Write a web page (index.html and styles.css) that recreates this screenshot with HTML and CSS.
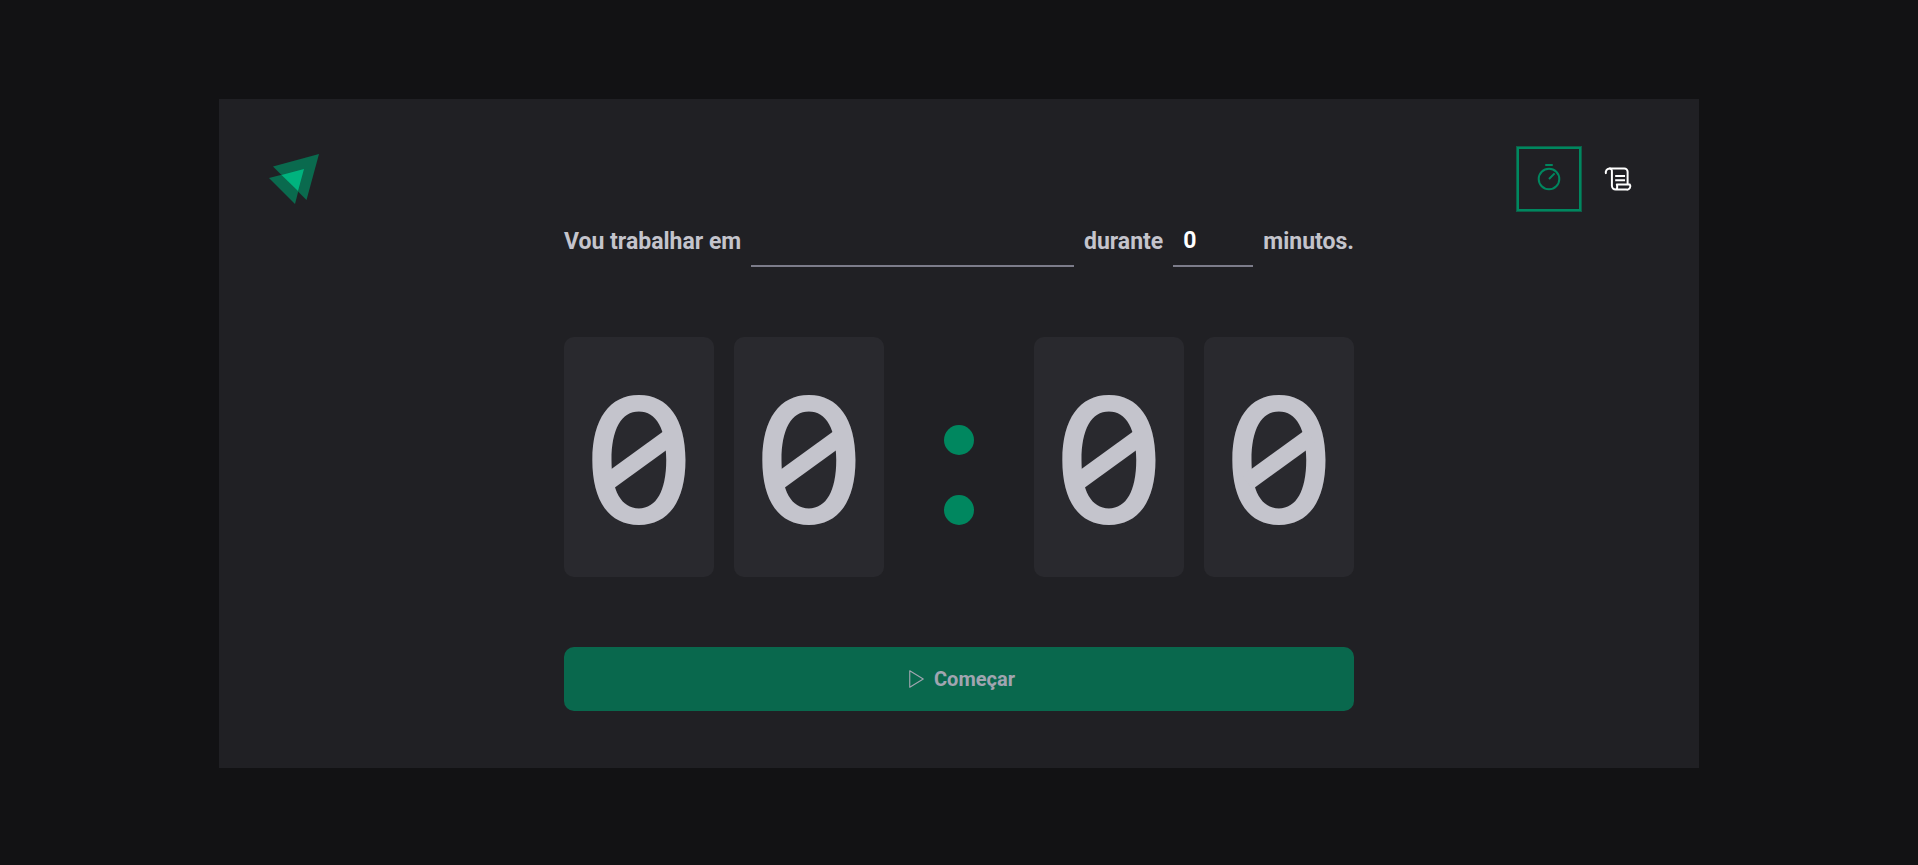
FILE: index.html
```html
<!DOCTYPE html>
<html lang="pt-BR">
<head>
    <meta charset="UTF-8">
    <meta name="viewport" content="width=device-width, initial-scale=1.0">
    <title>Ignite Timer</title>
    <link rel="stylesheet" href="styles.css">
</head>

<body>
    <div class="layout">
        <header class="header">
            <svg class="logo" viewBox="0 0 52 52" aria-label="Ignite">
                <path class="logo-shape" d="M5 13.500 51 1 38.500 47z"/>
                <path class="logo-shape" d="M1 25 36 16 27 51z"/>
                <path class="logo-core" d="M13.500 22 36 16 30 38z"/>
            </svg>
            <nav class="nav">
                <a class="active" href="#timer" title="Timer">
                    <svg viewBox="0 0 256 256">
                        <circle cx="128" cy="128" r="88"/>
                        <path d="M128 128 176 80M96 8h64"/>
                    </svg>
                </a>
                <a href="#history" title="Histórico">
                    <svg viewBox="0 0 256 256">
                        <path d="M26 84a34 34 0 0 1 28-46h128a28 28 0 0 1 28 28v108"/>
                        <path d="M54 38a22 22 0 0 1 22 26v122a32 32 0 0 0 32 32h92a28 28 0 0 0 28-44H118c6 18 4 44-10 44"/>
                        <path d="M104 102h84M104 138h84"/>
                    </svg>
                </a>
            </nav>
        </header>

        <main>
            <form class="timer">
                <div class="task-row">
                    <label for="task">Vou trabalhar em</label>
                    <input type="text" id="task" name="task">
                    <label for="minutes">durante</label>
                    <input type="text" inputmode="numeric" id="minutes" name="minutes" value="0">
                    <span>minutos.</span>
                </div>

                <div class="countdown">
                    <span class="digit zero">0</span>
                    <span class="digit zero">0</span>
                    <div class="separator"><i></i><i></i></div>
                    <span class="digit zero">0</span>
                    <span class="digit zero">0</span>
                </div>

                <button type="submit" disabled>
                    <svg viewBox="0 0 256 256"><path d="M72 40v176l144-88z"/></svg>
                    Começar
                </button>
            </form>
        </main>
    </div>
</body>
</html>
```
FILE: styles.css
```css
* {
    margin: 0;
    padding: 0;
    box-sizing: border-box;
}

body {
    background-color: #121214;
    color: #c4c4cc;
    font-family: Roboto, sans-serif;
}

.layout {
    max-width: 1480px;
    margin: 99px auto 97px;
    padding: 48px 49px 57px;
    background-color: #202024;
}

.header {
    display: flex;
    align-items: center;
    justify-content: space-between;
}

.logo {
    width: 52px;
    height: 52px;
}

.logo-shape {
    fill: #0a6a4e;
}

.logo-core {
    fill: #00b37e;
}

.nav {
    display: flex;
    gap: 5px;
}

.nav a {
    display: flex;
    align-items: center;
    justify-content: center;
    width: 64px;
    height: 64px;
    color: #fff;
}

.nav a.active {
    border: 2px solid #00875f;
    box-shadow: 0 0 0 1px #0c5f47;
    color: #00875f;
}

.nav svg {
    width: 30px;
    height: 30px;
    overflow: visible;
    fill: none;
    stroke: currentColor;
    stroke-width: 17;
    stroke-linejoin: round;
}

.timer {
    display: flex;
    flex-direction: column;
    gap: 70px;
    max-width: 790px;
    margin: 5px auto 0;
}

.task-row {
    display: flex;
    align-items: center;
    gap: 10px;
    font-size: 23px;
    font-weight: bold;
}

.task-row input {
    height: 51px;
    padding: 0 10px;
    border: none;
    border-bottom: 2px solid #7c7c8a;
    background: transparent;
    color: #fff;
    font: inherit;
    outline: none;
}

#task {
    flex: 1;
    min-width: 0;
}

#minutes {
    width: 80px;
}

.countdown {
    display: flex;
    gap: 20px;
}

.digit {
    position: relative;
    flex: 1;
    height: 240px;
    border-radius: 10px;
    background-color: #29292e;
    font-family: Inter, sans-serif;
    font-size: 174px;
    font-weight: 500;
    line-height: 246px;
    text-align: center;
}

/* slash across the zero */
.zero::after {
    content: "";
    position: absolute;
    top: 114px;
    left: 36px;
    width: 78px;
    height: 17px;
    background-color: #c4c4cc;
    transform: rotate(-36deg);
}

.separator {
    display: flex;
    flex-direction: column;
    align-items: center;
    justify-content: center;
    gap: 40px;
    width: 110px;
    padding-top: 36px;
}

.separator i {
    width: 30px;
    height: 30px;
    border-radius: 50%;
    background-color: #00875f;
}

button {
    display: flex;
    align-items: center;
    justify-content: center;
    gap: 7px;
    height: 64px;
    border: none;
    border-radius: 10px;
    background-color: #00875f;
    color: #d8deec;
    font: bold 20px Roboto, sans-serif;
    cursor: pointer;
}

button:disabled {
    opacity: 0.7;
    cursor: not-allowed;
}

button svg {
    width: 24px;
    height: 24px;
    fill: none;
    stroke: currentColor;
    stroke-width: 12;
    stroke-linejoin: round;
}
```
